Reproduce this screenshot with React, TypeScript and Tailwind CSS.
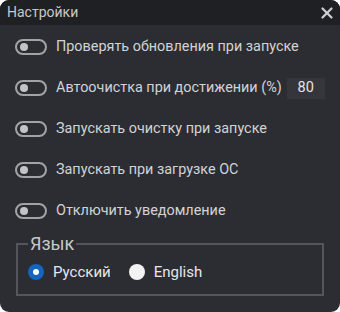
import { X } from 'lucide-react';

const options = [
  'Проверять обновления при запуске',
  'Автоочистка при достижении (%)',
  'Запускать очистку при запуске',
  'Запускать при загрузке ОС',
  'Отключить уведомление',
];

function Toggle() {
  return (
    <span className="flex h-[16px] w-[32px] shrink-0 items-center rounded-full border-2 border-[#a3a3a6] pl-[3px]">
      <span className="h-[8px] w-[8px] rounded-full bg-[#c4c4c6]" />
    </span>
  );
}

export default function App() {
  return (
    <div className="h-[312px] w-[340px] overflow-hidden rounded-[9px] bg-[#2c2d32] font-['Roboto',sans-serif] text-[#d2d3d6]">
      <div className="flex h-[25px] items-center justify-between bg-[#1f2023] pl-[7px] pr-[4px]">
        <span className="text-[14px] text-[#c7c8cc]">Настройки</span>
        <X className="h-[18px] w-[18px] text-[#cfcfd2]" strokeWidth={3} />
      </div>

      <div className="flex flex-col gap-[25px] pl-[15px] pt-[14px]">
        {options.map((label, i) => (
          <div key={label} className="flex h-[16px] items-center">
            <Toggle />
            <span className="ml-[9px] text-[14.4px] leading-none">{label}</span>
            {i === 1 && (
              <span className="ml-[5px] flex h-[21px] w-[38px] items-center justify-center bg-[#35363b] text-[14.5px] text-[#e2e3e6]">
                80
              </span>
            )}
          </div>
        ))}
      </div>

      <fieldset className="mx-[16px] mt-[15px] h-[62px] border-2 border-[#55565b] px-[10px] pb-0">
        <legend className="px-[2px] text-[18px] leading-[19px] text-[#c7c8cc]">Язык</legend>
        <div className="mt-[8px] flex items-center text-[15px]">
          <span className="flex h-[16px] w-[16px] items-center justify-center rounded-full bg-[#1565c0]">
            <span className="h-[6px] w-[6px] rounded-full bg-white" />
          </span>
          <span className="ml-[9px] text-[#e6e7ea]">Русский</span>
          <span className="ml-[18px] h-[16px] w-[16px] rounded-full bg-[#f3f3f3]" />
          <span className="ml-[9px] text-[#e6e7ea]">English</span>
        </div>
      </fieldset>
    </div>
  );
}
